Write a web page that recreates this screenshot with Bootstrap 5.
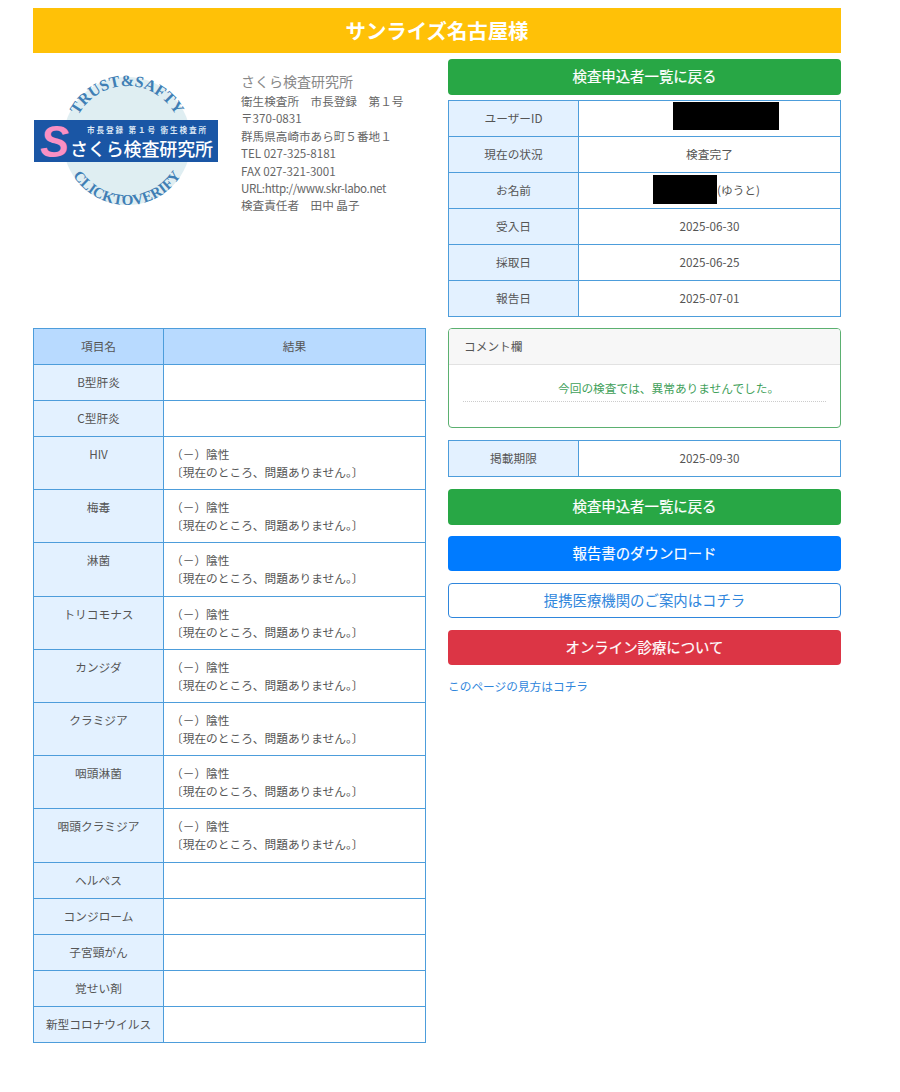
<!DOCTYPE html>
<html lang="ja">
<head>
<meta charset="utf-8">
<title>検査結果</title>
<link href="https://cdn.jsdelivr.net/npm/bootstrap@5.3.0/dist/css/bootstrap.min.css" rel="stylesheet">
<style>
body{font-family:"Noto Sans CJK JP","Open Sans",sans-serif;font-size:11.7px;color:#555;background:#fff}
.page-wrap{width:808px;margin:8px 0 0 33px}
.title-bar{height:45px;background:#ffc107;color:#fff;font-size:20.4px;font-weight:700;line-height:45px;text-align:center}
.cols{--bs-gutter-x:23px}
.side-a{flex:0 0 415px;width:415px;padding-right:10.5px}
.side-b{flex:0 0 416px;width:416px}
.act{display:block;width:100%;height:35.5px;padding:0;border-radius:4px;font-size:14.4px;font-weight:400;line-height:32.5px;margin-bottom:11.4px;border:1px solid transparent;-webkit-text-stroke:.2px currentColor}
.act-top{margin-top:6px;margin-bottom:5.5px}
.act-green,.act-green:hover{background:#28a745;color:#fff}
.act-blue,.act-blue:hover{background:#007bff;color:#fff}
.act-line,.act-line:hover{background:#fff;color:#2f86dc;border-color:#2f86dc;-webkit-text-stroke:0}
.act-red,.act-red:hover{background:#dc3545;color:#fff}
.info-tbl{width:100%;table-layout:fixed;border-collapse:collapse;margin:0}
.info-tbl td,.info-tbl th{border:1px solid #4d9ddb;height:36px;padding:8px 12px;line-height:18.1px;font-weight:400;color:#555;text-align:center;background:#fff;vertical-align:top}
.info-tbl .head-cell{width:130px;background:#e3f1ff;padding-left:4px;padding-right:4px}
.info-tbl th.top-cell{background:#b8daff}
.info-tbl td.res{text-align:left;padding-left:7px}
.mask{display:inline-block;height:18px;vertical-align:top;position:relative}
.mask::after{content:"";position:absolute;left:0;right:0;background:#000}
.mask-id{width:106px;margin-left:33px}
.mask-id::after{top:-7px;bottom:-3px}
.mask-name{width:64px;margin-left:-6px}
.mask-name::after{top:-6px;bottom:-5px}
.logo-col{width:208px;flex:none}
.logo-svg{display:block;margin-top:6px}
.addr{line-height:17.4px;padding-top:18px;white-space:nowrap;color:#666;font-size:11.6px}
.addr-name{font-size:14px;color:#888;line-height:20px;margin-bottom:2px}
.url-line{letter-spacing:-.4px}
.second-row{margin-top:11px}
.note-card{border:1px solid #5bb070;border-radius:4px;height:100px;margin-bottom:12px;overflow:hidden}
.note-head{height:36px;line-height:34px;background:#f7f7f7;border-bottom:1px solid #e2e2e2;padding-left:15px;color:#555}
.note-body{margin:14px 14px 0;border-bottom:1px dotted #ccc;padding:0 0 4px 95px;line-height:18px;color:#3f9f5a}
.limit-tbl{margin-bottom:12px}
.small-link{display:block;color:#2f86dc;text-decoration:none;margin-top:1px;line-height:18px}
</style>
</head>
<body>
<div class="page-wrap">
  <div class="title-bar">サンライズ名古屋様</div>
  <div class="row cols">
    <div class="side-a d-flex">
      <div class="logo-col">
        <svg width="186" height="152" viewBox="0 0 186 152" class="logo-svg" role="img" aria-label="さくら検査研究所">
          <defs>
            <path id="arcTop" d="M 39 82 A 55 55 0 0 1 149 82"/>
            <path id="arcBot" d="M 30 82 A 64 64 0 0 0 158 82"/>
          </defs>
          <circle cx="94" cy="82" r="64" fill="#dfeef2"/>
          <text font-family="Liberation Serif,serif" font-size="16" font-weight="700" fill="#3f7fb5"><textPath href="#arcTop" startOffset="50%" text-anchor="middle">TRUST&amp;SAFTY</textPath></text>
          <text font-family="Liberation Serif,serif" font-size="15" font-weight="700" fill="#3f7fb5"><textPath href="#arcBot" startOffset="50%" text-anchor="middle">CLICKTOVERIFY</textPath></text>
          <rect x="1" y="61" width="184" height="42" fill="#1a56a5"/>
          <text x="7" y="98" font-family="Liberation Sans,sans-serif" font-size="44" font-weight="700" font-style="italic" fill="#f990c3" textLength="29" lengthAdjust="spacingAndGlyphs">S</text>
          <text x="54" y="74" font-family="Noto Sans CJK JP,sans-serif" font-size="7.6" font-weight="700" fill="#dce8f5" textLength="119">市長登録 第１号 衛生検査所</text>
          <text x="37" y="97" font-family="Noto Sans CJK JP,sans-serif" font-size="18" font-weight="500" fill="#fff" textLength="143">さくら検査研究所</text>
        </svg>
      </div>
      <div class="addr">
        <div class="addr-name">さくら検査研究所</div>
        衛生検査所　市長登録　第１号<br>〒370-0831<br>群馬県高崎市あら町５番地１<br>TEL 027-325-8181<br>FAX 027-321-3001<br><span class="url-line">URL:http://www.skr-labo.net</span><br>検査責任者　田中 晶子
      </div>
    </div>
    <div class="side-b">
      <a href="#" class="btn act act-green act-top">検査申込者一覧に戻る</a>
      <table class="info-tbl">
        <tr><td class="head-cell">ユーザーID</td><td><span class="mask mask-id"></span></td></tr>
        <tr><td class="head-cell">現在の状況</td><td>検査完了</td></tr>
        <tr><td class="head-cell">お名前</td><td><span class="mask mask-name"></span>(ゆうと)</td></tr>
        <tr><td class="head-cell">受入日</td><td>2025-06-30</td></tr>
        <tr><td class="head-cell">採取日</td><td>2025-06-25</td></tr>
        <tr><td class="head-cell">報告日</td><td>2025-07-01</td></tr>
      </table>
    </div>
  </div>
  <div class="row cols second-row">
    <div class="side-a">
      <table class="info-tbl">
        <tr><th class="head-cell top-cell">項目名</th><th class="top-cell">結果</th></tr>
        <tr><td class="head-cell">B型肝炎</td><td class="res"></td></tr>
        <tr><td class="head-cell">C型肝炎</td><td class="res"></td></tr>
        <tr><td class="head-cell">HIV</td><td class="res">（－）陰性<br>〔現在のところ、問題ありません。〕</td></tr>
        <tr><td class="head-cell">梅毒</td><td class="res">（－）陰性<br>〔現在のところ、問題ありません。〕</td></tr>
        <tr><td class="head-cell">淋菌</td><td class="res">（－）陰性<br>〔現在のところ、問題ありません。〕</td></tr>
        <tr><td class="head-cell">トリコモナス</td><td class="res">（－）陰性<br>〔現在のところ、問題ありません。〕</td></tr>
        <tr><td class="head-cell">カンジダ</td><td class="res">（－）陰性<br>〔現在のところ、問題ありません。〕</td></tr>
        <tr><td class="head-cell">クラミジア</td><td class="res">（－）陰性<br>〔現在のところ、問題ありません。〕</td></tr>
        <tr><td class="head-cell">咽頭淋菌</td><td class="res">（－）陰性<br>〔現在のところ、問題ありません。〕</td></tr>
        <tr><td class="head-cell">咽頭クラミジア</td><td class="res">（－）陰性<br>〔現在のところ、問題ありません。〕</td></tr>
        <tr><td class="head-cell">ヘルペス</td><td class="res"></td></tr>
        <tr><td class="head-cell">コンジローム</td><td class="res"></td></tr>
        <tr><td class="head-cell">子宮頸がん</td><td class="res"></td></tr>
        <tr><td class="head-cell">覚せい剤</td><td class="res"></td></tr>
        <tr><td class="head-cell">新型コロナウイルス</td><td class="res"></td></tr>
      </table>
    </div>
    <div class="side-b">
      <div class="note-card">
        <div class="note-head">コメント欄</div>
        <p class="note-body">今回の検査では、異常ありませんでした。</p>
      </div>
      <table class="info-tbl limit-tbl">
        <tr><td class="head-cell">掲載期限</td><td>2025-09-30</td></tr>
      </table>
      <a href="#" class="btn act act-green">検査申込者一覧に戻る</a>
      <a href="#" class="btn act act-blue">報告書のダウンロード</a>
      <a href="#" class="btn act act-line">提携医療機関のご案内はコチラ</a>
      <a href="#" class="btn act act-red">オンライン診療について</a>
      <a href="#" class="small-link">このページの見方はコチラ</a>
    </div>
  </div>
</div>
<script src="https://cdn.jsdelivr.net/npm/bootstrap@5.3.0/dist/js/bootstrap.bundle.min.js"></script>
</body>
</html>
